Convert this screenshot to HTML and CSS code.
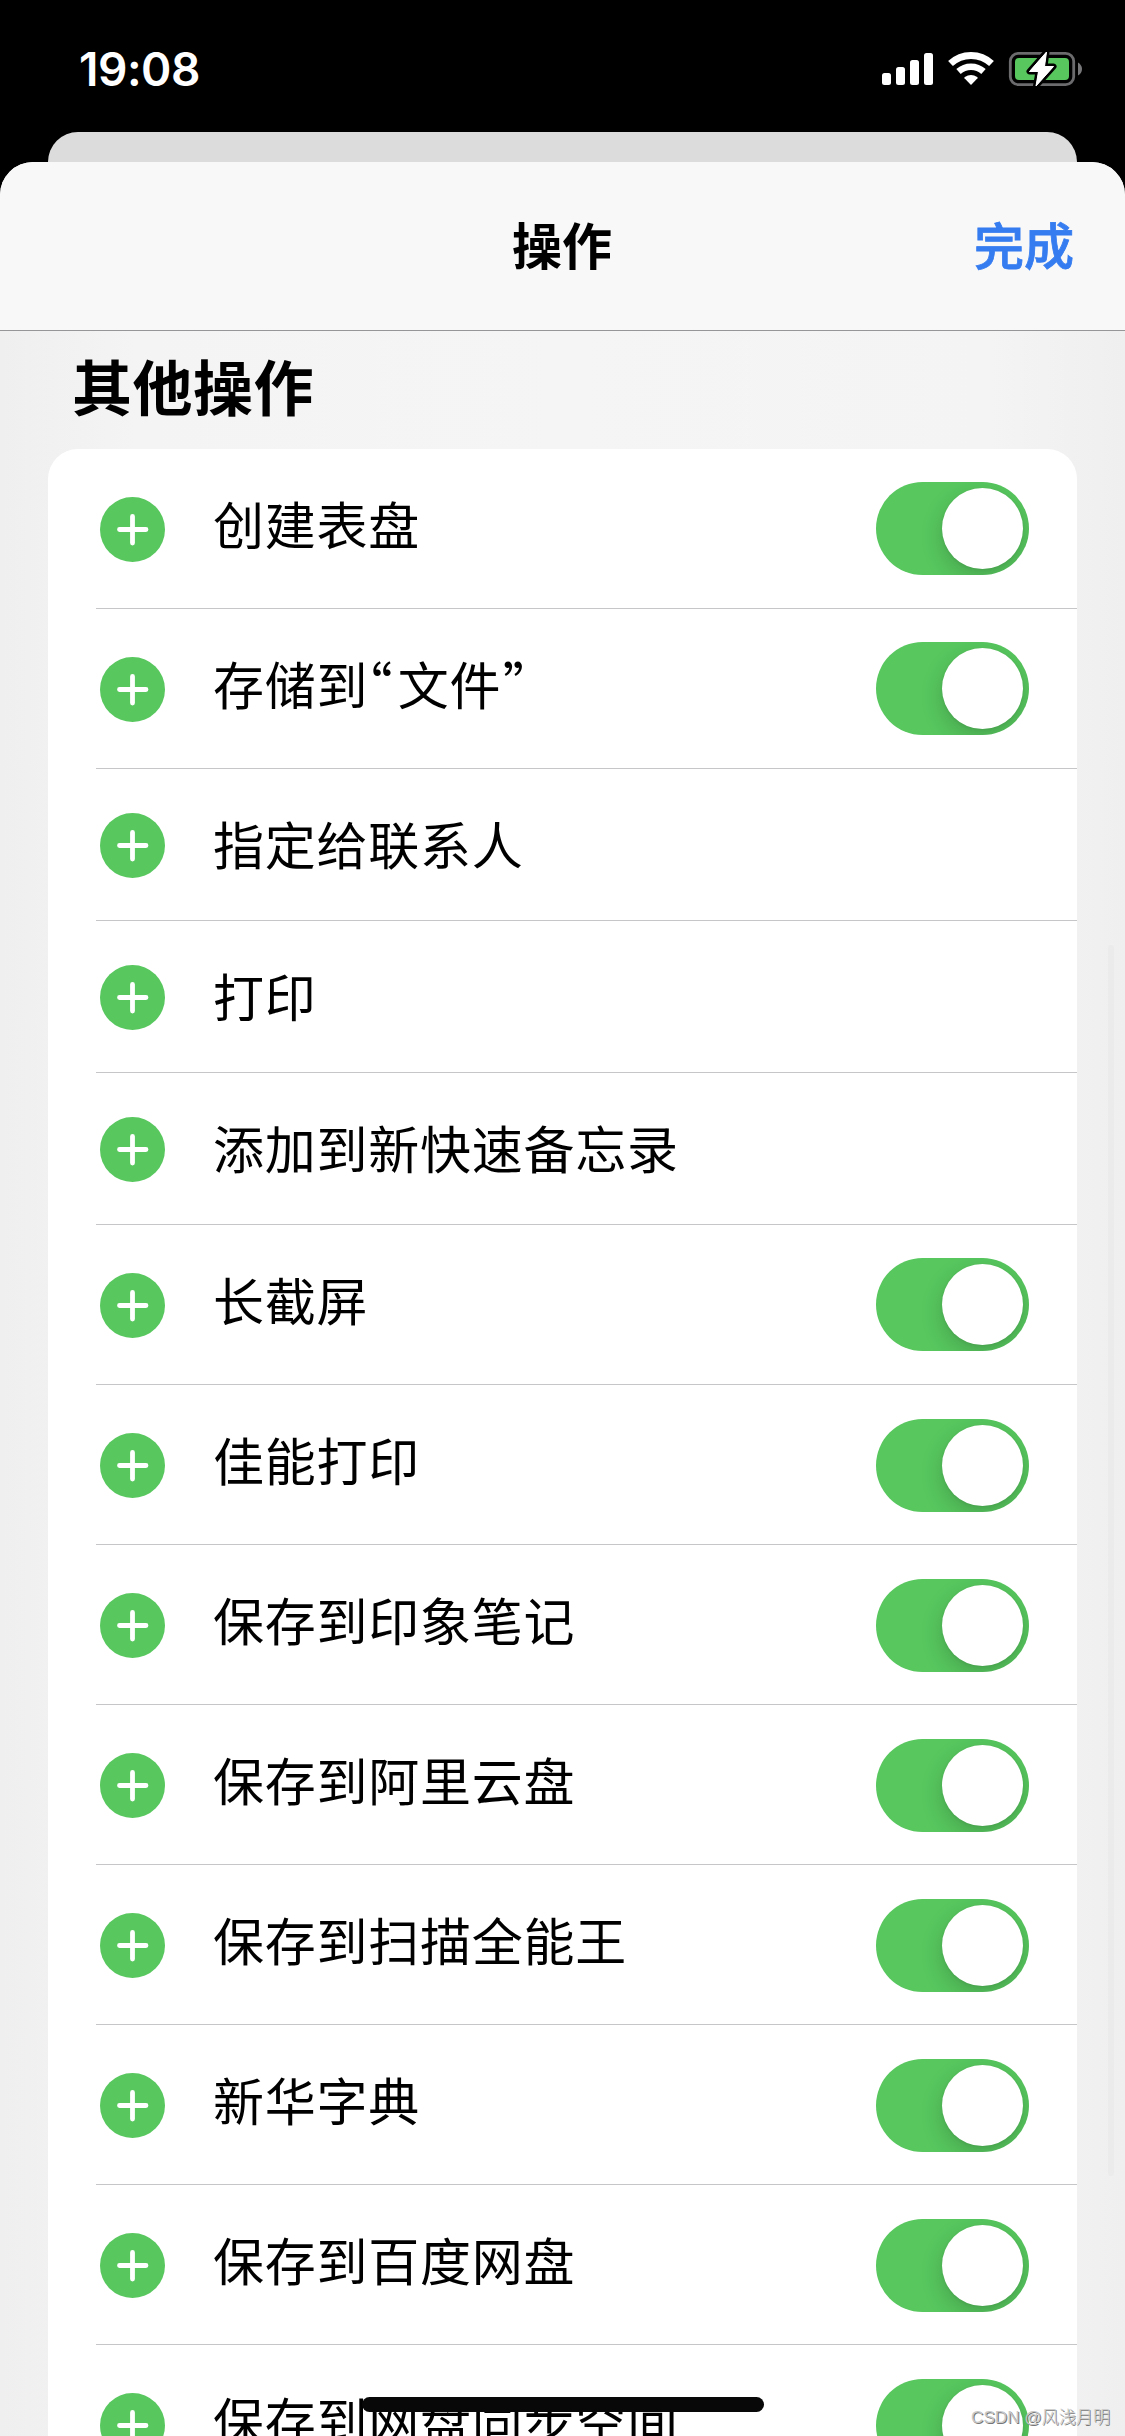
FILE: index.html
```html
<!DOCTYPE html>
<html lang="zh-CN">
<head>
<meta charset="utf-8">
<title>操作</title>
<link rel="stylesheet" href="styles.css">
</head>
<body>
<svg width="0" height="0" class="defs"><symbol id="plus" viewBox="0 0 65 65"><circle cx="32.5" cy="32.5" r="32.5" fill="#57c75e"/><path d="M32.5 19.500v26.500M19.500 32.500h26.500" stroke="#fff" stroke-width="4.800" stroke-linecap="round"/></symbol></svg>
<div class="screen">
  <div class="status">
    <span class="time">19:08</span>
    <svg class="signal" width="202" height="38" viewBox="880 50 202 38">
      <g fill="#fff"><rect x="882" y="73" width="9" height="12" rx="2.5"/><rect x="896" y="67" width="9" height="18" rx="2.5"/><rect x="910" y="60" width="9" height="25" rx="2.5"/><rect x="924" y="53" width="9" height="32" rx="2.5"/></g>
      <g fill="none" stroke="#fff"><path d="M950.5 63.5a30 30 0 0 1 41 0" stroke-width="7"/><path d="M958.5 71.5a18.5 18.5 0 0 1 25 0" stroke-width="6.5"/></g>
      <path d="M971 85l-6.500-6.700q-.6-.8.3-1.400q6.200-3.600 12.400 0q.9.600.3 1.400z" fill="#fff"/>
      <rect x="1010.300" y="53.300" width="63.400" height="31.400" rx="8" fill="none" stroke="#6b6b6d" stroke-width="2.800"/>
      <path d="M1078 62.500q4 2.500 4 6.500t-4 6.500z" fill="#77777a"/>
      <rect x="1015" y="58" width="54" height="22" rx="4" fill="#57c75e"/>
      <path d="M1046.500 52L1029.500 71.500h9L1036 86L1053.500 66.500h-9z" fill="#fff" stroke="#000" stroke-width="6" stroke-linejoin="round" paint-order="stroke"/>
      <path d="M1046.500 52L1029.500 71.500h9L1036 86L1053.500 66.500h-9z" fill="#fff" stroke="#fff" stroke-width="1" stroke-linejoin="round"/>
    </svg>
  </div>
  <div class="back-card"></div>
  <main class="sheet">
    <header class="nav"><span></span><h1>操作</h1><a class="done">完成</a></header>
    <h2>其他操作</h2>
    <div class="list">
      <div class="row"><svg class="add"><use href="#plus"/></svg><span class="label">创建表盘</span><i class="toggle"></i></div>
      <div class="row"><svg class="add"><use href="#plus"/></svg><span class="label">存储到<span class="q open">“</span>文件<span class="q close">”</span></span><i class="toggle"></i></div>
      <div class="row short"><svg class="add"><use href="#plus"/></svg><span class="label">指定给联系人</span></div>
      <div class="row short"><svg class="add"><use href="#plus"/></svg><span class="label">打印</span></div>
      <div class="row short"><svg class="add"><use href="#plus"/></svg><span class="label">添加到新快速备忘录</span></div>
      <div class="row"><svg class="add"><use href="#plus"/></svg><span class="label">长截屏</span><i class="toggle"></i></div>
      <div class="row"><svg class="add"><use href="#plus"/></svg><span class="label">佳能打印</span><i class="toggle"></i></div>
      <div class="row"><svg class="add"><use href="#plus"/></svg><span class="label">保存到印象笔记</span><i class="toggle"></i></div>
      <div class="row"><svg class="add"><use href="#plus"/></svg><span class="label">保存到阿里云盘</span><i class="toggle"></i></div>
      <div class="row"><svg class="add"><use href="#plus"/></svg><span class="label">保存到扫描全能王</span><i class="toggle"></i></div>
      <div class="row"><svg class="add"><use href="#plus"/></svg><span class="label">新华字典</span><i class="toggle"></i></div>
      <div class="row"><svg class="add"><use href="#plus"/></svg><span class="label">保存到百度网盘</span><i class="toggle"></i></div>
      <div class="row"><svg class="add"><use href="#plus"/></svg><span class="label">保存到网盘同步空间</span><i class="toggle"></i></div>
    </div>
  </main>
  <div class="scrollbar"></div>
  <div class="home"></div>
  <div class="watermark">CSDN @风浅月明</div>
</div>
</body>
</html>
```
FILE: styles.css
```css
* { box-sizing: border-box; }
body { margin: 0; background: #000; font-family: "Noto Sans CJK SC", sans-serif; color: #000; }
.defs { display: block; }
.screen { position: relative; width: 1125px; height: 2436px; overflow: hidden; background: #000; display: flex; flex-direction: column; }
.status { height: 132px; flex: none; display: flex; justify-content: space-between; align-items: flex-start; padding: 50px 43px 0 79px; }
.time { font: 600 46px/38px Inter, sans-serif; color: #fff; letter-spacing: -0.5px; }
.signal { display: block; }
.back-card { flex: none; height: 64px; margin: 0 48px -34px; background: #dcdcdc; border-radius: 30px 30px 0 0; }
.sheet { position: relative; flex: none; height: 2274px; overflow: hidden; border-radius: 33px 33px 0 0; background: linear-gradient(90deg, #efeff0, #f4f4f4 12%, #f5f5f5 50%, #f4f4f4 88%, #efeff0); }
.nav { height: 169px; display: grid; grid-template-columns: 1fr auto 1fr; align-items: center; padding: 0 51px 7px 50px; background: #f8f8f8; border-bottom: 1px solid #969698; }
.nav h1, .done { margin: 0; font-size: 50px; line-height: 74px; font-weight: 600; }
.done { justify-self: end; color: #357cf0; font-weight: 500; -webkit-text-stroke: .8px #357cf0; }
h2 { margin: 0; height: 118px; padding: 10px 0 0 72px; font-size: 60px; line-height: 88px; font-weight: 600; letter-spacing: .5px; }
.list { margin: 0 48px; background: #fff; border-radius: 30px 30px 0 0; }
.row { height: 160px; display: flex; align-items: center; padding: 0 48px 0 52px; background: linear-gradient(#c6c6c8, #c6c6c8) 48px 100% / 100% 1px no-repeat; }
.short { height: 152px; }
.add { width: 65px; height: 65px; flex: none; }
.label { margin-left: 48px; padding-bottom: 12px; font-size: 51px; line-height: 74px; letter-spacing: .75px; white-space: nowrap; }
.short .label { padding-bottom: 5px; }
.q { font-feature-settings: "palt"; letter-spacing: 4px; }
.open { margin: 0 2px 0 -2px; }
.close { margin-left: 2px; }
.toggle { position: relative; width: 153px; height: 93px; margin: 0 0 1px auto; border-radius: 47px; background: #57c75e; overflow: hidden; padding: 6px; }
.row:nth-child(-n+6) .toggle { margin-bottom: 2px; }
.toggle::after { content: ""; display: block; width: 81px; height: 81px; margin-left: auto; border-radius: 50%; background: #fff; box-shadow: 0 8px 22px rgba(0,0,0,.18), 0 1px 3px rgba(0,0,0,.08); }
.row:nth-child(n+7) .toggle { margin-bottom: 0; }
.scrollbar { position: absolute; left: 1108px; top: 945px; width: 6px; height: 1231px; border-radius: 3px; background: #ebebec; }
.home { position: absolute; left: 362px; top: 2397px; width: 402px; height: 15px; border-radius: 8px; background: #080808; }
.watermark { position: absolute; right: 15px; top: 2404px; font: 300 17.1px/28px "Liberation Sans", "Noto Sans CJK SC", sans-serif; color: #c8c8c8; text-shadow: 1px 1px 0 #777; white-space: nowrap; }
```
